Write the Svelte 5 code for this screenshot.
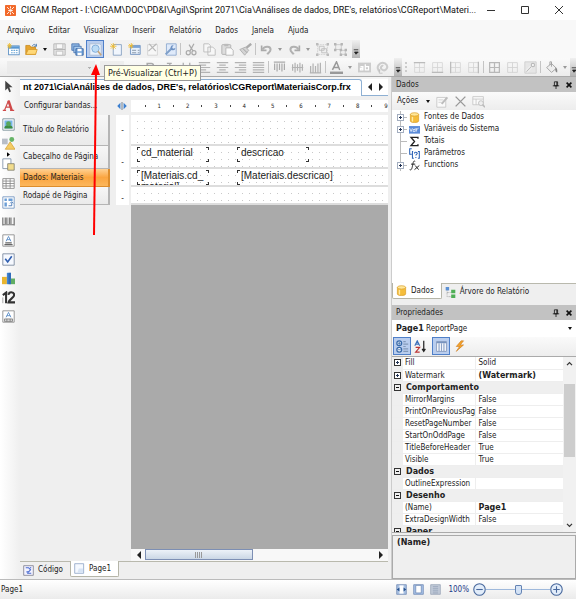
<script lang="ts">
  type Tool = { icon: string; label: string; off?: boolean; kind?: string };

  const menus = ['Arquivo', 'Editar', 'Visualizar', 'Inserir', 'Relatório', 'Dados', 'Janela', 'Ajuda'];

  // inner markup of every 16x16 icon
  const icons: Record<string, string> = {
    logo: '<rect width="16" height="16" rx="1" fill="#f26a2b"/><path d="M3 3l3 3M13 3l-3 3M3 13l3-3M13 13l-3-3M8 2v3M8 11v3M5 8h6M8 6l2 2-2 2-2-2z" stroke="#fff" stroke-width="1.3" fill="none"/>',
    new: '<rect x="2" y="3.500" width="13" height="11" fill="#fff" stroke="#4d87c0"/><path d="M2 4h13v3H2z" fill="#5796d2"/><path d="M5 9h2M8 9h2M11 9h2M5 12h2M8 12h2M11 12h2" stroke="#68a6d6" stroke-width="1.500"/><path d="M3 0v7M0 3.500h6M1 1l4 5M5 1L1 6" stroke="#f0ba28"/>',
    open: '<path d="M1 3h5l1 2h6v9H1z" fill="#e6a52f" stroke="#c98a20"/><path d="M4 8h11l-2 6H1z" fill="#ffd877" stroke="#d49a2c"/><path d="M9 4c1-3 4-3 5 0M14 1v3h-3" fill="none" stroke="#3a6ea8"/>',
    save: '<path d="M1 1h14v14H1z" fill="#e4e4e4" stroke="#b2b2b2"/><path d="M4 1h8v6H4zM4 10h8v5H4z" fill="#f8f8f8" stroke="#bbb"/><path d="M1 8h14" stroke="#aaa"/>',
    saveAll: '<path d="M1 1h9v8H1z" fill="#8db6e2" stroke="#426fae"/><path d="M3.500 4h9v8h-9z" fill="#a6caed" stroke="#426fae"/><path d="M6 7h9v8H6z" fill="#6fa0d8" stroke="#335f9f"/><path d="M8 7h5v3H8zM8 12h5v3H8z" fill="#fff"/>',
    preview: '<path d="M1 1h12l2 2v12H1z" fill="#e8f1fc" stroke="#a9b9cf"/><circle cx="8" cy="7" r="4.500" fill="#bcdcf6" stroke="#75a4d4"/><path d="M11 10l4 5" stroke="#c8a57a" stroke-width="2"/>',
    page: '<path d="M4 2h10v13H4z" fill="#f1f6fd" stroke="#7d99bd"/><path d="M4 0v8M0 4h8M1 1l6 6M7 1L1 7" stroke="#f1bb2a"/>',
    dialog: '<path d="M3 3h12v11H3z" fill="#e7f0fb" stroke="#6288ba"/><path d="M3 3h12v3H3z" fill="#7ba3d5"/><path d="M5 9h5M5 12h5M12 9h2M12 12h2" stroke="#789"/><path d="M4 0v7M0 3.500h7M1 1l5 5M6 1L1 6" stroke="#f1bb2a"/>',
    delete: '<path d="M2 2h12v13H2z" fill="#f7f7f7" stroke="#d0d0d0"/><path d="M4 1l8 9M13 1L3 10" stroke="#b8b8b8" stroke-width="1.500"/>',
    settings: '<path d="M3 1h12v14H3z" fill="#dfeafa" stroke="#86a4cd"/><path d="M2 14l7-7" stroke="#7e9fc9" stroke-width="2.500"/><path d="M12 3a3 3 0 1 0 2 3l-3 1-1-2z" fill="#6d92c4"/>',
    cut: '<path d="M11 1L6 10M5 2l5 8" stroke="#aaa" stroke-width="1.500"/><circle cx="4" cy="12" r="2.500" fill="none" stroke="#aaa" stroke-width="1.500"/><circle cx="11" cy="12" r="2.500" fill="none" stroke="#aaa" stroke-width="1.500"/>',
    copy: '<path d="M1 1h6l2 2v8H1zM6 5h6l3 3v7H6z" fill="#f7f7f7" stroke="#b6b6b6"/>',
    paste: '<rect x="1" y="2" width="11" height="12" rx="1" fill="#ddd" stroke="#aaa"/><path d="M4 1h5v3H4z" fill="#bbb"/><path d="M6 6h6l3 3v6H6z" fill="#fafafa" stroke="#b0b0b0"/>',
    brush: '<path d="M15 1L9 6" stroke="#aaa" stroke-width="3"/><path d="M1 8l7-3 4 4-5 6z" fill="#d4d4d4" stroke="#aaa"/><path d="M5 7l5 5" stroke="#999"/>',
    undo: '<path d="M2 3v6h6" fill="none" stroke="#aaa" stroke-width="2"/><path d="M3 8c3-5 10-4 10 0 0 3-3 4-4 6" fill="none" stroke="#b1b1b1" stroke-width="2.500"/>',
    redo: '<path d="M14 3v6H8" fill="none" stroke="#aaa" stroke-width="2"/><path d="M13 8C10 3 3 4 3 8c0 3 3 4 4 6" fill="none" stroke="#b1b1b1" stroke-width="2.500"/>',
    group: '<path d="M2 2h12v12H2z" fill="none" stroke="#ccc" stroke-dasharray="2 1"/><path d="M4 4h6v5H4zM7 7h6v5H7z" fill="#eee" stroke="#bbb"/><path d="M0 0h3v3H0zM13 0h3v3h-3zM0 13h3v3H0zM13 13h3v3h-3z" fill="#bbb"/>',
    ungroup: '<path d="M2 2h7v6H2zM8 9h6v5H8z" fill="#eee" stroke="#c4c4c4"/><path d="M0 0h3v3H0zM8 0h3v3H8zM0 7h3v3H0zM7 7h3v3H7zM13 7h3v3h-3zM7 13h3v3H7zM13 13h3v3h-3z" fill="#b5b5b5"/>',
    bold: '<path d="M4 3h5a2 2 0 0 1 0 5H4zM4 8h6a2 2 0 0 1 0 5H4z" fill="none" stroke="#aaa" stroke-width="2"/>',
    italic: '<path d="M6 3h6M4 13h6M10 3L7 13" fill="none" stroke="#aaa" stroke-width="1.500"/>',
    underline: '<path d="M4 2v6c0 5 8 5 8 0V2M3 14h10" fill="none" stroke="#aaa" stroke-width="1.500"/>',
    left: '<path d="M1 2h14M1 5h9M1 8h14M1 11h9M1 14h14" stroke="#b3b3b3" stroke-width="1.500"/>',
    center: '<path d="M1 2h14M4 5h8M1 8h14M4 11h8M1 14h14" stroke="#b3b3b3" stroke-width="1.500"/>',
    right: '<path d="M1 2h14M6 5h9M1 8h14M6 11h9M1 14h14" stroke="#b3b3b3" stroke-width="1.500"/>',
    justify: '<path d="M1 2h14M1 5h14M1 8h14M1 11h14M1 14h14" stroke="#b3b3b3" stroke-width="1.500"/>',
    top: '<path d="M1 1.500h14M2 3v8M5 3v10M8 3v8M11 3v10M14 3v8" stroke="#aaa" stroke-width="1.500"/>',
    middle: '<path d="M1 8h14M2 4v8M5 2v12M8 4v8M11 2v12M14 4v8" stroke="#b3b3b3" stroke-width="1.500"/>',
    bottom: '<path d="M1 14.500h14M2 6v8M5 3v11M8 6v8M11 3v11M14 2v12" stroke="#b3b3b3" stroke-width="1.500"/>',
    color: '<path d="M3 11L8 1l4 10M5 8h6" fill="none" stroke="#999" stroke-width="1.800"/><path d="M0 13h16v3H0z" fill="#999"/>',
    highlight: '<path d="M0 2h16v12H0z" fill="#ccc"/><path d="M3 7h3v4H3V9h3M9 4v7h4V7H9" fill="none" stroke="#fff" stroke-width="1.500"/>',
    rotate: '<path d="M5 13c-7-5 0-13 6-10 6 4 1 10-3 8-4-2-1-6 1-5" fill="none" stroke="#ccc" stroke-width="2.500"/><path d="M4 10v5h4" fill="none" stroke="#bbb"/>',
    bTop: '<path d="M2 2h12v12H2zM8 2v12M2 8h12" fill="none" stroke="#d4d4d4"/><path d="M1 2h14" stroke="#bbb" stroke-width="1.500"/>',
    bBottom: '<path d="M2 2h12v12H2zM8 2v12M2 8h12" fill="none" stroke="#d4d4d4"/><path d="M1 14h14" stroke="#bbb" stroke-width="1.500"/>',
    bLeft: '<path d="M2 2h12v12H2zM8 2v12M2 8h12" fill="none" stroke="#d4d4d4"/><path d="M2 1v14" stroke="#bbb" stroke-width="1.500"/>',
    bRight: '<path d="M2 2h12v12H2zM8 2v12M2 8h12" fill="none" stroke="#d4d4d4"/><path d="M14 1v14" stroke="#bbb" stroke-width="1.500"/>',
    bAll: '<path d="M2 2h12v12H2zM8 2v12M2 8h12" fill="none" stroke="#b8b8b8" stroke-width="1.500"/>',
    bNone: '<path d="M2 2h12v12H2zM8 2v12M2 8h12" fill="none" stroke="#d0d0d0"/>',
    bEdit: '<path d="M1 1h14v14H1z" fill="#e6e6e6" stroke="#ccc"/><path d="M3 13l6-6" stroke="#fff" stroke-width="3"/><path d="M3 13l6-6" stroke="#bbb" stroke-width="1.500"/><circle cx="11" cy="5" r="2" fill="#fff" stroke="#bbb" stroke-width="1.500"/>',
    bucket: '<path d="M2 8l6-5 6 6-6 5z" fill="#eee" stroke="#999"/><path d="M6 5V1h2v6" fill="none" stroke="#999"/><path d="M13 8c3 2 2 5 2 6-2 0-3-3-2-6" fill="#888"/>',
    pointer: '<path d="M4 1v12l3-3 2 5 2-1-2-5h4z" fill="#444"/>',
    text: '<path d="M1 14h4M10 14h5M3 14L8 2M8 2l4 12M5 10h6" fill="none" stroke="#cf4a4a" stroke-width="1.500"/><path d="M8 2l4 12" stroke="#cf4a4a" stroke-width="3"/>',
    picture: '<path d="M1 1h14v14H1z" fill="#fff" stroke="#6f8791"/><path d="M3 3h10v10H3z" fill="#79b6ea"/><path d="M3 11c3-3 7-3 10 0v2H3z" fill="#3d8c42"/><circle cx="8" cy="7" r="3" fill="#59a75c"/>',
    shapes: '<rect x="0" y="2" width="7" height="7" fill="#b8bec7"/><circle cx="12" cy="3" r="3" fill="#66b467"/><path d="M10 6l6 9H4z" fill="#f5cc64" stroke="#d6a53a"/>',
    sub: '<path d="M1 1h10v12H1z" fill="#fff" stroke="#7c8fa5"/><path d="M7 7h8v8H7z" fill="#f2dc8c" stroke="#7d7d6d"/>',
    table: '<path d="M1 2h14v12H1zM1 5h14M1 8h14M1 11h14M5 2v12M10 2v12" fill="#fff" stroke="#858585"/>',
    matrix: '<path d="M1 1h14v14H1z" fill="#fff" stroke="#6a8fbe"/><path d="M3 3h3v3H3zM8 3h5v3H8zM3 8h3v5H3z" fill="#6b9ed6"/><path d="M8 12h4V8M10 9l2-2 2 2" fill="none" stroke="#3469ac"/>',
    barcode: '<path d="M1 3v10M4 3v8M6 3v8M9 3v8M11 3v8M15 3v10M1 12h14" stroke="#777" stroke-width="1.500"/>',
    rich: '<path d="M1 1h14v14H1z" fill="#fff" stroke="#858585"/><path d="M5 9l3-6 3 6M6 7h4" fill="none" stroke="#4b82c3"/><path d="M4 11h8M3 13h10" stroke="#666" stroke-width="1.500"/>',
    check: '<path d="M1 1h14v14H1z" fill="#f6f9ff" stroke="#738399"/><path d="M4 7l3 4 5-7" fill="none" stroke="#305fb0" stroke-width="2"/>',
    chart: '<path d="M0 6h6v9H0z" fill="#e9b52e"/><path d="M6 1h5v14H6z" fill="#4386d2"/><path d="M8 1h3v14H8z" fill="#2f6bb8"/><path d="M11 8h5v7h-5z" fill="#61ad64"/>',
    zip: '<path d="M1 5l4-3v13M8 5c0-5 7-4 7 0 0 3-6 5-7 9h8" fill="none" stroke="#333" stroke-width="2.500"/><path d="M1 8v7M7 1v4" stroke="#999"/>',
    cellular: '<path d="M1 1h14v14H1z" fill="#fff" stroke="#858585"/><path d="M5 9l3-6 3 6M6 7h4" fill="none" stroke="#4b82c3"/><path d="M3 11h10v3H3zM6 11v3M10 11v3" fill="#ddd" stroke="#777"/>',
    db: '<path d="M2 3v10c0 3 12 3 12 0V3" fill="#f5bd3b" stroke="#d99a20"/><ellipse cx="8" cy="3.500" rx="6" ry="2.500" fill="#ffe79a" stroke="#d99a20"/><path d="M5 7v7" stroke="#ffe9a6" stroke-width="2"/>',
    var: '<rect width="16" height="11" y="3" fill="#5b8bd8"/><path d="M1 6l2 5 2-5M9 6v5H6V8h3M11 11V6M11 8l3-2" fill="none" stroke="#fff"/>',
    sigma: '<path d="M13 4V2H3l5 6-5 6h10v-2" fill="none" stroke="#222" stroke-width="2"/>',
    param: '<path d="M4 1H1v8h3M6 5H5v10h2M13 5h2v10h-2" fill="none" stroke="#2b62b5" stroke-width="1.500"/><path d="M8 8c0-3 4-2 4 0 0 1-2 1-2 3M10 13v1.500" fill="none" stroke="#2b62b5" stroke-width="1.500"/>',
    fx: '<path d="M9 2C6 0 6 5 5 9c-1 5-2 6-4 5M3 6h6M9 8l5 6M15 8l-7 6" fill="none" stroke="#222" stroke-width="1.400"/>',
    edit: '<path d="M1 3h11v12H1z" fill="#fafafa" stroke="#c4c4c4"/><path d="M3 6h6M3 9h4" stroke="#ccc"/><path d="M7 11l7-8" stroke="#bdbdbd" stroke-width="2.500"/>',
    x: '<path d="M2 2l12 12M14 2L2 14" stroke="#999" stroke-width="1.700"/>',
    view: '<path d="M1 2h13v10H1zM1 5h13M5 5v7" fill="#fafafa" stroke="#c4c4c4"/><circle cx="11" cy="10" r="3" fill="#eee" stroke="#bbb"/><path d="M13 12l3 3" stroke="#bbb" stroke-width="2"/>',
    tree: '<path d="M3 5v9h6M3 8h6" fill="none" stroke="#888" stroke-dasharray="1 1"/><path d="M1 0h5v5H1z" fill="#5c91d4"/><path d="M9 4h6v5H9zM9 11h6v5H9z" fill="#4fae55"/>',
    categories: '<circle cx="4" cy="4" r="3" fill="#fff" stroke="#3769a9" stroke-width="1.500"/><circle cx="4" cy="12" r="3" fill="#fff" stroke="#3769a9" stroke-width="1.500"/><path d="M2 4h4M2 12h4M4 2v4" stroke="#3769a9"/><path d="M9 2h3M9 5h6M9 8h3M9 11h6M9 14h6" stroke="#8299b9" stroke-width="1.500"/>',
    sort: '<path d="M1 7l3-6 3 6M2 5h4" fill="none" stroke="#3b6fba" stroke-width="1.400"/><path d="M2 9h5l-5 6h5" fill="none" stroke="#bb3434" stroke-width="1.400"/><path d="M12 1v12M10 11l2 3 2-3" fill="none" stroke="#222" stroke-width="1.500"/>',
    props: '<path d="M2 2h12v12H2z" fill="#fff" stroke="#7c90b4"/><path d="M2 2h12v2H2z" fill="#7893bf"/><path d="M5 4v10M8 4v10M11 4v10" stroke="#8ea3c8" stroke-width="1.500"/>',
    events: '<path d="M10 1L4 8h4l-4 6 9-8H9l4-5z" fill="#f4a32c" stroke="#c97618" stroke-width=".7"/>',
    code: '<path d="M1 1h14v14H1z" fill="#f3f3ff" stroke="#6b6b7b"/><path d="M4 4h4l3 3-3 3H5M6 12h6M10 4h2" fill="none" stroke="#4769cf" stroke-width="1.500"/>',
    sheet: '<path d="M1 1h13v14H1z" fill="#f5f9ff" stroke="#7c96bd"/><path d="M7 8h6v6H5z" fill="#d7e4f5"/>',
    fit: '<path d="M1 1h14v14H1z" fill="#aac2e3" stroke="#6480ad"/><path d="M5 2h6v12H5z" fill="#fff"/><path d="M1 8l4-3v6zM15 8l-4-3v6z" fill="#24508e"/>',
    whole: '<path d="M1 1h14v14H1z" fill="#a8c3e9" stroke="#6480ad"/><path d="M4 2h8v11H4z" fill="#fff" stroke="#6480ad"/>',
    wide: '<path d="M1 1h14v14H1z" fill="#c3ccda" stroke="#8d9aaf"/><path d="M4 4h8M4 7h8M4 10h8M4 13h8" stroke="#8594ad"/>'
  };

  const standard: Tool[] = [
    { icon: 'new', label: 'Novo' },
    { icon: 'open', label: 'Abrir' },
    { icon: '', label: 'Recentes', kind: 'drop' },
    { icon: 'save', label: 'Salvar' },
    { icon: 'saveAll', label: 'Salvar tudo' },
    { icon: 'preview', label: 'Pré-Visualizar', kind: 'active' },
    { icon: '', label: '', kind: 'gap' },
    { icon: 'page', label: 'Nova página' },
    { icon: 'dialog', label: 'Novo diálogo' },
    { icon: 'delete', label: 'Excluir página' },
    { icon: 'settings', label: 'Configurar página' },
    { icon: '', label: '', kind: 'sep' },
    { icon: 'cut', label: 'Recortar' },
    { icon: 'copy', label: 'Copiar' },
    { icon: 'paste', label: 'Colar' },
    { icon: 'brush', label: 'Copiar formato' },
    { icon: '', label: '', kind: 'sep' },
    { icon: 'undo', label: 'Desfazer' },
    { icon: '', label: 'Lista desfazer', kind: 'drop', off: true },
    { icon: 'redo', label: 'Refazer' },
    { icon: '', label: 'Lista refazer', kind: 'drop', off: true },
    { icon: 'group', label: 'Agrupar' },
    { icon: 'ungroup', label: 'Desagrupar' }
  ];

  const format: Tool[] = [
    { icon: 'bold', label: 'Negrito' },
    { icon: 'italic', label: 'Itálico' },
    { icon: 'underline', label: 'Sublinhado' },
    { icon: 'left', label: 'Esquerda' },
    { icon: 'center', label: 'Centro' },
    { icon: 'right', label: 'Direita' },
    { icon: 'justify', label: 'Justificar' },
    { icon: '', label: '', kind: 'sep' },
    { icon: 'top', label: 'Topo' },
    { icon: 'middle', label: 'Meio' },
    { icon: 'bottom', label: 'Base' },
    { icon: '', label: '', kind: 'sep' },
    { icon: 'color', label: 'Cor' },
    { icon: '', label: 'Cores', kind: 'drop', off: true },
    { icon: 'highlight', label: 'Destaque' },
    { icon: 'rotate', label: 'Girar' }
  ];

  const borders: Tool[] = [
    { icon: 'bTop', label: 'Borda superior' },
    { icon: 'bBottom', label: 'Borda inferior' },
    { icon: 'bLeft', label: 'Borda esquerda' },
    { icon: 'bRight', label: 'Borda direita' },
    { icon: '', label: '', kind: 'sep' },
    { icon: 'bAll', label: 'Todas as bordas' },
    { icon: 'bNone', label: 'Sem bordas' },
    { icon: 'bEdit', label: 'Editar bordas' },
    { icon: '', label: '', kind: 'sep' },
    { icon: 'bucket', label: 'Preenchimento' },
    { icon: '', label: 'Cores de preenchimento', kind: 'drop', off: true }
  ];

  const toolbox = ['pointer', 'text', 'picture', 'shapes', 'sub', 'table', 'matrix', 'barcode', 'rich', 'check', 'chart', 'zip', 'cellular'];

  const bands = [
    { name: 'Título do Relatório', size: 'tall', fields: [] },
    { name: 'Cabeçalho de Página', size: 'mid', fields: ['cd_material', 'descricao'] },
    { name: 'Dados: Materiais', size: 'low', fields: ['[Materiais.cd_ material]', '[Materiais.descricao]'] },
    { name: 'Rodapé de Página', size: 'low', fields: [] }
  ];
  let selectedBand = $state('Dados: Materiais');

  const tree = [
    { icon: 'db', name: 'Fontes de Dados', open: true },
    { icon: 'var', name: 'Variáveis do Sistema', open: true },
    { icon: 'sigma', name: 'Totais', open: false },
    { icon: 'param', name: 'Parâmetros', open: false },
    { icon: 'fx', name: 'Functions', open: true }
  ];

  const props = [
    { name: 'Fill', value: 'Solid', mark: '+' },
    { name: 'Watermark', value: '(Watermark)', mark: '+', bold: true },
    { name: 'Comportamento', head: true },
    { name: 'MirrorMargins', value: 'False' },
    { name: 'PrintOnPreviousPag', value: 'False' },
    { name: 'ResetPageNumber', value: 'False' },
    { name: 'StartOnOddPage', value: 'False' },
    { name: 'TitleBeforeHeader', value: 'True' },
    { name: 'Visible', value: 'True' },
    { name: 'Dados', head: true },
    { name: 'OutlineExpression', value: '' },
    { name: 'Desenho', head: true },
    { name: '(Name)', value: 'Page1', bold: true },
    { name: 'ExtraDesignWidth', value: 'False' },
    { name: 'Paper', head: true }
  ];

  let zoom = $state(50);
</script>

{#snippet icon(name: string)}
  <svg class="icon" viewBox="0 0 16 16" aria-hidden="true">{@html icons[name]}</svg>
{/snippet}

{#snippet tools(list: Tool[])}
  {#each list as t}
    {#if t.kind === 'sep' || t.kind === 'gap'}
      <span class={t.kind}></span>
    {:else if t.kind === 'drop'}
      <button class="drop" class:off={t.off} aria-label={t.label}></button>
    {:else}
      <button class="tool" class:active={t.kind === 'active'} aria-label={t.label}>{@render icon(t.icon)}</button>
    {/if}
  {/each}
{/snippet}

{#snippet cap()}
  <button class="cap" aria-label="Opções da barra">
    <svg viewBox="0 0 8 16"><path d="M1 9h6M2 12h5L4 15z" stroke="#222" fill="#222" /></svg>
  </button>
{/snippet}

{#snippet panelHead(title: string)}
  <header class="panel-head">
    <h2>{title}</h2>
    <button aria-label="Fixar"><svg viewBox="0 0 10 10"><path d="M3 1h4v5H3zM1 6h8M5 6v4M6 1v5" stroke="#111" fill="none" /></svg></button>
    <button aria-label="Fechar"><svg viewBox="0 0 10 10"><path d="M2 2l6 6M8 2L2 8" stroke="#111" stroke-width="2" /></svg></button>
  </header>
{/snippet}

<div class="window">
  <header class="titlebar">
    {@render icon('logo')}
    <h1>CIGAM Report - I:\CIGAM\DOC\PD&I\Agil\Sprint 2071\Cia\Análises de dados, DRE's, relatórios\CGReport\Materi...</h1>
    <div class="win-buttons">
      <button class="min" aria-label="Minimizar"><svg viewBox="0 0 10 10"><path d="M1 5.500h8" /></svg></button>
      <button aria-label="Maximizar"><svg viewBox="0 0 10 10"><path d="M1.500 1.500h7v7h-7z" /></svg></button>
      <button aria-label="Fechar janela"><svg viewBox="0 0 10 10"><path d="M1 1l8 8M9 1L1 9" /></svg></button>
    </div>
  </header>

  <nav class="menu">
    {#each menus as m}
      <button>{m}</button>
    {/each}
  </nav>

  <div class="bar">
    {@render tools(standard)}
    {@render cap()}
    <div class="tooltip" role="tooltip">Pré-Visualizar (Ctrl+P)</div>
    <svg class="pointer-arrow" viewBox="0 0 12 172" aria-hidden="true">
      <path d="M7 8L5 171" stroke="#f00" stroke-width="2" /><path d="M7 0l4 11H2z" fill="#f00" />
    </svg>
  </div>

  <div class="bar second">
    <select class="font" aria-label="Fonte" disabled></select>
    <select class="size" aria-label="Tamanho" disabled></select>
    {@render tools(format)}
    {@render cap()}
    <span class="grip"></span>
    {@render tools(borders)}
    {@render cap()}
  </div>

  <div class="body">
    <aside class="toolbox">
      {#each toolbox as t}
        <button aria-label={t}>{@render icon(t)}</button>
        {#if t === 'shapes'}
          <button class="more" aria-label="Mais formas"><svg viewBox="0 0 4 6"><path d="M0 0l4 3-4 3z" /></svg></button>
        {/if}
      {/each}
    </aside>

    <main class="editor">
      <div class="doc-tab">
        <strong>nt 2071\Cia\Análises de dados, DRE's, relatórios\CGReport\MateriaisCorp.frx</strong>
        <div class="doc-nav">
          <button aria-label="Anterior"><svg viewBox="0 0 5 8"><path d="M5 0v8L1 4z" /></svg></button>
          <button aria-label="Próxima"><svg viewBox="0 0 5 8"><path d="M0 0v8l4-4z" /></svg></button>
        </div>
      </div>

      <div class="row ruler-row">
        <button class="config">Configurar bandas...</button>
        <svg class="split" viewBox="0 0 12 10"><path d="M4 1v8L0 5zM8 1v8l4-4z" fill="#3b7fd0" /><path d="M6 0v10" stroke="#567" /></svg>
        <div class="ruler">
          {#each [1, 2, 3, 4, 5, 6, 7, 8, 9] as n}
            <i></i><span>{n}</span>
          {/each}
        </div>
      </div>

      {#each bands as band}
        <div class="row {band.size}">
          <button class="band" class:selected={selectedBand === band.name} onclick={() => (selectedBand = band.name)}>{band.name}</button>
          <div class="vruler">-</div>
          <div class="page">
            {#each band.fields as f}
              <div class="field"><span>{f}</span></div>
            {/each}
          </div>
        </div>
      {/each}

      <div class="row rest">
        <div class="canvas">
          <div class="hscroll">
            <button aria-label="Rolar à esquerda"><svg viewBox="0 0 5 8"><path d="M5 0v8L1 4z" /></svg></button>
            <div class="track"><div class="thumb"></div></div>
            <button aria-label="Rolar à direita"><svg viewBox="0 0 5 8"><path d="M0 0v8l4-4z" /></svg></button>
          </div>
        </div>
      </div>

      <div class="page-tabs">
        <button>{@render icon('code')}Código</button>
        <button class="on">{@render icon('sheet')}Page1</button>
      </div>
    </main>

    <aside class="side">
      <section class="data">
        {@render panelHead('Dados')}
        <div class="actions">
          <button class="text-button">Ações</button>
          <button class="drop" aria-label="Lista de ações"></button>
          {@render tools([{ icon: 'edit', label: 'Editar' }, { icon: 'x', label: 'Excluir' }, { icon: 'view', label: 'Ver dados' }])}
        </div>
        <ul class="tree">
          {#each tree as node}
            <li>
              <span class="joint">{#if node.open}<b class="plus"></b>{/if}</span>
              {@render icon(node.icon)}
              {node.name}
            </li>
          {/each}
        </ul>
      </section>
      <div class="side-tabs">
        <button class="on">{@render icon('db')}Dados</button>
        <button>{@render icon('tree')}Árvore do Relatório</button>
      </div>

      <section class="properties">
        {@render panelHead('Propriedades')}
        <button class="object"><span><b>Page1</b> ReportPage</span><i></i></button>
        <div class="prop-tools">
          <button class="active" aria-label="Categorias">{@render icon('categories')}</button>
          <button aria-label="Ordenar">{@render icon('sort')}</button>
          <span class="gap"></span>
          <button class="active" aria-label="Propriedades">{@render icon('props')}</button>
          <button aria-label="Eventos">{@render icon('events')}</button>
        </div>
        <div class="grid">
          <table>
            <tbody>
              {#each props as p}
                <tr class:head={p.head}>
                  <td class="mark">{#if p.head || p.mark}<b class="plus dark" class:minus={p.head}></b>{/if}</td>
                  {#if p.head}
                    <th colspan="2">{p.name}</th>
                  {:else}
                    <td class="name">{p.name}</td>
                    <td class="value" class:bold={p.bold}>{p.value}</td>
                  {/if}
                </tr>
              {/each}
            </tbody>
          </table>
          <div class="vscroll">
            <svg viewBox="0 0 8 6"><path d="M1 5l3-3 3 3" /></svg>
            <div class="vthumb"></div>
            <svg viewBox="0 0 8 6"><path d="M1 1l3 3 3-3" /></svg>
          </div>
        </div>
        <div class="hint">(Name)</div>
      </section>
    </aside>
  </div>

  <footer class="status">
    <span>Page1</span>
    <div class="zoom">
      <button aria-label="Largura da página">{@render icon('fit')}</button>
      <button aria-label="Página inteira">{@render icon('whole')}</button>
      <button aria-label="Tamanho real">{@render icon('wide')}</button>
      <output>100%</output>
      <button class="round" aria-label="Diminuir"><svg viewBox="0 0 12 12"><circle cx="6" cy="6" r="5.300" /><path d="M3 6h6" /></svg></button>
      <input type="range" aria-label="Zoom" bind:value={zoom} />
      <button class="round" aria-label="Aumentar"><svg viewBox="0 0 12 12"><circle cx="6" cy="6" r="5.300" /><path d="M3 6h6M6 3v6" /></svg></button>
    </div>
  </footer>
</div>

<style>
  :global(body) {
    margin: 0;
  }

  .window {
    display: flex;
    flex-direction: column;
    min-height: 100vh;
    background: #fff;
    color: #222;
    font: 8px/12px 'DejaVu Sans Condensed', 'DejaVu Sans', sans-serif;
    overflow: hidden;
  }

  .window :is(*, *::before, *::after) {
    box-sizing: border-box;
  }

  button {
    display: flex;
    align-items: center;
    justify-content: center;
    padding: 0;
    border: 0;
    background: none;
    color: inherit;
    font: inherit;
    white-space: nowrap;
  }

  h1,
  h2 {
    margin: 0;
    font-weight: normal;
  }

  .icon {
    flex: none;
    width: 13px;
    height: 13px;
  }

  .titlebar {
    display: flex;
    align-items: center;
    height: 20px;
    padding-left: 5px;
  }

  .titlebar .icon {
    width: 11px;
    height: 11px;
  }

  h1 {
    flex: 1;
    min-width: 0;
    margin-left: 5px;
    overflow: hidden;
    font: 9px/16px Roboto, 'Noto Sans', sans-serif;
    white-space: nowrap;
    color: #111;
  }

  .win-buttons {
    display: flex;
  }

  .win-buttons button {
    width: 34px;
    height: 18px;
  }

  .win-buttons .min {
    width: 12px;
    margin-right: 11px;
  }

  .win-buttons svg {
    width: 10px;
    height: 10px;
    fill: none;
    stroke: #333;
  }

  .menu {
    display: flex;
    gap: 14px;
    height: 20px;
    padding: 1px 0 0 7px;
    background: #f8f8f8;
  }

  .bar {
    position: relative;
    display: flex;
    height: 18px;
    padding-left: 4px;
    background: linear-gradient(90deg, #f1f1f1 0 354px, #f9f9f9 358px);
  }

  .bar.second {
    height: 19px;
    background: linear-gradient(#fafafa, #ececec);
    border-bottom: 1px solid #aaa;
  }

  .tool {
    flex: none;
    width: 18px;
  }

  .active {
    background: #b9cdee;
    border: 1px solid #4f7fc8;
  }

  .drop {
    flex: none;
    width: 10px;
  }

  .drop::before,
  .object i {
    content: '';
    border: 2px solid transparent;
    border-top: 3px solid #111;
    border-bottom: 0;
  }

  .drop.off::before {
    border-top-color: #999;
  }

  .sep {
    flex: none;
    width: 1px;
    margin: 3px 1px;
    background: #c4c4c4;
  }

  .gap {
    flex: none;
    width: 3px;
  }

  .cap {
    flex: none;
    width: 8px;
    margin-left: 3px;
    background: linear-gradient(#f0f0f0, #b4b4b4);
  }

  .second > .cap:last-child {
    margin-left: auto;
  }

  .cap svg {
    width: 6px;
    height: 14px;
  }

  .font,
  .size {
    flex: none;
    appearance: none;
    width: 88px;
    height: 13px;
    margin: 3px 5px 0 3px;
    border: 0;
    background:
      linear-gradient(#999, #999) 81px 6px / 3px 1px no-repeat,
      linear-gradient(#999, #999) 82px 7px / 1px 1px no-repeat,
      #e9e9e9;
  }

  .size {
    width: 24px;
    margin: 3px 17px 0 0;
  }

  .grip {
    flex: none;
    width: 2px;
    margin: 4px 3px;
    border-left: 2px dotted #ccc;
  }

  .tooltip {
    position: absolute;
    z-index: 2;
    top: 25px;
    left: 104px;
    padding: 0 3px;
    border: 1px solid #999;
    background: #ffffe4;
    font-size: 9px;
    line-height: 14px;
    white-space: nowrap;
  }

  .pointer-arrow {
    position: absolute;
    z-index: 3;
    top: 24px;
    left: 89px;
    width: 12px;
    height: 172px;
  }

  .body {
    display: grid;
    grid-template-columns: 20px minmax(0, 1fr) 185px;
    flex: 1;
    border-bottom: 1px solid #bbb;
    background: #efefef;
  }

  .toolbox {
    display: flex;
    flex-direction: column;
    align-items: center;
    padding-right: 4px;
    background: linear-gradient(90deg, #fff, #efefef);
  }

  .toolbox button {
    width: 18px;
    height: 19px;
  }

  .toolbox .more {
    height: 6px;
    margin: -2px 0 -2px;
  }

  .more svg {
    width: 3px;
    height: 5px;
  }

  .editor {
    display: flex;
    flex-direction: column;
    min-width: 0;
    border-right: 3px solid #efefef;
  }

  .doc-tab {
    display: flex;
    height: 19px;
    border-top: 2px solid #f5f5f5;
    background: #fff;
  }

  .doc-tab strong {
    overflow: hidden;
    padding: 0 10px 0 3px;
    border: solid #8eb0d3;
    border-width: 1px 1px 0 0;
    border-top-right-radius: 3px;
    font: bold 9px/15px 'Liberation Sans', Arial, sans-serif;
    white-space: nowrap;
    color: #000;
  }

  .doc-nav {
    display: flex;
    flex: 1 0 24px;
    padding-left: 2px;
    border-bottom: 1px solid #8eb0d3;
  }

  .doc-nav button {
    width: 12px;
  }

  .doc-nav svg,
  .hscroll svg {
    width: 5px;
    height: 8px;
    fill: #222;
  }

  .row {
    display: grid;
    grid-template-columns: 90px 13px minmax(0, 1fr);
    column-gap: 6px;
  }

  .row > :nth-child(3) {
    margin-left: -4px;
  }

  .ruler-row {
    align-items: center;
    height: 19px;
  }

  .config {
    justify-content: flex-start;
    padding-left: 4px;
  }

  .split {
    width: 12px;
    height: 8px;
  }

  .ruler {
    display: flex;
    align-items: center;
    height: 12px;
    padding-left: 7px;
    overflow: hidden;
    background: #fff;
    font-size: 6px;
  }

  .ruler > * {
    flex: 0 0 5.67%;
    text-align: center;
  }

  .ruler i {
    height: 2px;
    background: linear-gradient(#444, #444) center / 1px 2px no-repeat;
  }

  .band {
    justify-content: flex-start;
    padding-left: 3px;
    border: solid #b5b5b5;
    border-width: 0 2px 1px 0;
    background: linear-gradient(#f7f7f7, #eaeaea);
  }

  .band.selected {
    background: linear-gradient(#ffd193, #fba540 50%, #fcb75c);
    border-color: #dd8d2c;
  }

  .vruler {
    display: flex;
    align-items: flex-end;
    justify-content: center;
    background: #fff;
  }

  .tall .vruler {
    align-items: center;
  }

  .page {
    display: flex;
    gap: 28px;
    padding: 1px 0 0 6px;
    overflow: hidden;
    border-bottom: 2px solid #ddd;
    background:
      linear-gradient(90deg, #fff 6px, transparent 6px) 0 0 / 7px 7px,
      linear-gradient(#fff 6px, #c8c8c8 6px) 0 0 / 7px 7px;
  }

  .tall {
    height: 31px;
  }

  .mid {
    height: 23px;
  }

  .low {
    height: 18px;
  }

  /* corner marks of a report object */
  .field {
    --c: linear-gradient(#333, #333) no-repeat;
    flex: none;
    width: 72px;
    height: 15px;
    padding: 0 4px;
    overflow: hidden;
    background:
      var(--c) 0 0 / 3px 1px,
      var(--c) 0 0 / 1px 3px,
      var(--c) 100% 0 / 3px 1px,
      var(--c) 100% 0 / 1px 3px,
      var(--c) 0 100% / 3px 1px,
      var(--c) 0 100% / 1px 3px,
      var(--c) 100% 100% / 3px 1px,
      var(--c) 100% 100% / 1px 3px;
    font: 10px/11px 'Liberation Sans', Arial, sans-serif;
  }

  /* the text runs over the right edge here, so only the left corners stay */
  .low .field:last-child {
    width: 100px;
    background:
      var(--c) 0 0 / 3px 1px,
      var(--c) 0 0 / 1px 3px,
      var(--c) 0 100% / 3px 1px,
      var(--c) 0 100% / 1px 3px;
    white-space: nowrap;
  }

  .rest {
    flex: 1;
    grid-template-columns: 111px minmax(0, 1fr);
    column-gap: 0;
    min-height: 80px;
  }

  .canvas {
    display: flex;
    grid-column: 2;
    flex-direction: column;
    justify-content: flex-end;
    background: #aaa;
  }

  .hscroll {
    display: flex;
    height: 12px;
    background: #f8f8f8;
  }

  .hscroll button {
    width: 14px;
  }

  .track {
    flex: 1;
  }

  .thumb {
    width: 47%;
    height: 11px;
    border: 1px solid #7d8fb4;
    background: linear-gradient(#edf2f8, #cbd7e5);
  }

  .thumb::after {
    content: '';
    display: block;
    width: 8px;
    height: 6px;
    margin: 2px auto;
    background: repeating-linear-gradient(90deg, #999 0 1px, transparent 1px 2px);
  }

  .page-tabs,
  .side-tabs {
    display: flex;
    height: 18px;
    border-top: 1px solid #b9b9ad;
  }

  .page-tabs button,
  .side-tabs button {
    gap: 4px;
    height: 16px;
    padding: 0 7px 0 3px;
  }

  .page-tabs .icon,
  .side-tabs .icon {
    width: 11px;
    height: 11px;
  }

  .page-tabs .on,
  .side-tabs .on {
    margin-top: -1px;
    border: 1px solid #b5b5a8;
    border-top: 0;
    border-radius: 0 0 2px 2px;
    background: #fff;
  }

  .side {
    display: flex;
    flex-direction: column;
    min-width: 0;
    border-left: 1px solid #ccc;
  }

  .data {
    display: flex;
    flex: 1;
    flex-direction: column;
    background: #fff;
  }

  .panel-head {
    display: flex;
    align-items: center;
    height: 15px;
    padding: 0 1px 0 4px;
    background: #c2c2c2;
  }

  .panel-head h2 {
    flex: 1;
    font-size: 8px;
  }

  .panel-head button {
    width: 13px;
  }

  .panel-head svg {
    width: 8px;
    height: 8px;
  }

  .actions {
    display: flex;
    align-items: center;
    height: 18px;
    padding-left: 5px;
    background: linear-gradient(#fafafa, #ededed);
  }

  .text-button {
    margin-right: 5px;
  }

  .tree {
    margin: 0;
    padding: 1px 0 0 5px;
    list-style: none;
  }

  .tree li {
    display: flex;
    align-items: center;
    height: 12px;
    gap: 4px;
  }

  .tree .icon {
    width: 11px;
    height: 11px;
  }

  .joint {
    display: flex;
    align-items: center;
    width: 10px;
    height: 12px;
    margin-right: -2px;
    background:
      linear-gradient(#bbb, #bbb) 3px 0 / 1px 100% no-repeat,
      linear-gradient(#bbb, #bbb) 3px 6px / 7px 1px no-repeat;
  }

  .plus {
    display: block;
    width: 7px;
    height: 7px;
    border: 1px solid #a3aec0;
    background:
      linear-gradient(#235, #235) center / 3px 1px no-repeat,
      linear-gradient(#235, #235) center / 1px 3px no-repeat,
      #fff;
  }

  .plus.dark {
    border-color: #333;
  }

  .plus.minus {
    background: linear-gradient(#111, #111) center / 3px 1px no-repeat;
  }

  .side-tabs {
    height: 22px;
  }

  .properties {
    display: flex;
    flex-direction: column;
  }

  .object {
    justify-content: space-between;
    height: 17px;
    padding: 0 4px;
    background: #fff;
  }

  .prop-tools {
    display: flex;
    height: 19px;
    padding: 0 1px 1px;
    background: linear-gradient(#fafafa, #ededed);
  }

  .prop-tools button {
    width: 18px;
  }

  .grid {
    display: flex;
    height: 177px;
    overflow: hidden;
    border: solid #aaa;
    border-width: 1px 0;
  }

  table {
    flex: 1;
    width: 0;
    height: 180px;
    border-collapse: collapse;
    table-layout: fixed;
    background: #fff;
  }

  tr {
    height: 12px;
  }

  td,
  th {
    height: 12px;
    padding: 0 0 0 3px;
    overflow: hidden;
    border-bottom: 1px solid #eee;
    font-size: 8px;
    line-height: 11px;
    text-align: left;
    white-space: nowrap;
  }

  td.mark {
    width: 11px;
    padding: 0 0 0 2px;
    background: #efefef;
  }

  td.name {
    width: 72px;
    padding-left: 2px;
    border-right: 1px solid #eee;
  }

  .head th {
    background: #efefef;
  }

  th,
  .bold,
  .hint,
  .object b {
    font-family: 'DejaVu Sans', sans-serif;
    font-weight: bold;
  }

  .vscroll {
    display: flex;
    flex-direction: column;
    justify-content: space-between;
    align-items: center;
    width: 13px;
    padding: 4px 0;
    background: #f1f1f1;
  }

  .vscroll svg {
    width: 7px;
    height: 5px;
    fill: none;
    stroke: #333;
    stroke-width: 1.5;
  }

  .vthumb {
    width: 11px;
    height: 73px;
    margin-bottom: 48px;
    background: #cdcdcd;
  }

  .hint {
    height: 44px;
    margin-top: 2px;
    padding: 1px 4px;
    border: 1px solid #aaa;
  }

  .status {
    display: flex;
    align-items: center;
    justify-content: space-between;
    height: 19px;
    padding: 0 13px 0 1px;
    background: linear-gradient(#fff, #ebebeb);
  }

  .zoom {
    display: flex;
    align-items: center;
  }

  .zoom button:not(.round) {
    width: 17px;
  }

  .zoom .icon {
    width: 11px;
    height: 11px;
  }

  output {
    margin: 0 4px;
    color: #223a88;
  }

  .round svg {
    width: 13px;
    height: 13px;
    fill: #e2edfa;
    stroke: #47679c;
  }

  input {
    appearance: none;
    width: 64px;
    height: 12px;
    margin: 0;
    background: linear-gradient(#9fb9dc, #9fb9dc) center / 100% 1px no-repeat;
  }

  input::-webkit-slider-thumb {
    appearance: none;
    width: 7px;
    height: 10px;
    border: 1px solid #6483b3;
    border-radius: 1px 1px 3px 3px;
    background: #d4e3f6;
  }
</style>
